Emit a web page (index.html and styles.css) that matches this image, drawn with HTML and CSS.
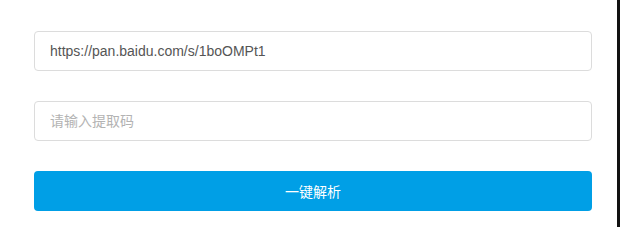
FILE: index.html
```html
<!DOCTYPE html>
<html lang="zh-CN">
<head>
<meta charset="utf-8">
<title>一键解析</title>
<link rel="stylesheet" href="styles.css">
</head>
<body>
<div class="page">
  <form class="form">
    <input class="field" type="text" value="https://pan.baidu.com/s/1boOMPt1">
    <input class="field" type="text" placeholder="请输入提取码">
    <button class="submit" type="button">一键解析</button>
  </form>
  <div class="edge"></div>
</div>
</body>
</html>
```
FILE: styles.css
```css
html, body {
  margin: 0;
  padding: 0;
  background: #fff;
}
.page {
  display: flex;
  width: 620px;
  height: 227px;
}
.form {
  flex: 1;
  display: flex;
  flex-direction: column;
  gap: 30px;
  padding: 31px 25px 0 34px;
  margin: 0;
}
.field {
  box-sizing: border-box;
  height: 40px;
  width: 100%;
  margin: 0;
  padding: 0 15px;
  border: 1px solid #dcdcdc;
  border-radius: 4px;
  background: #fff;
  font-family: "Liberation Sans", Arial, "Noto Sans CJK SC", sans-serif;
  font-size: 14px;
  color: #555;
  outline: none;
}
.field::placeholder {
  color: #b3b3b3;
}
.submit {
  box-sizing: border-box;
  height: 40px;
  width: 100%;
  margin: 0;
  border: none;
  border-radius: 4px;
  background: #009fe6;
  color: #fff;
  font-family: "Liberation Sans", Arial, "Noto Sans CJK SC", sans-serif;
  font-size: 14px;
}
.edge {
  width: 3px;
  background: #111;
}
```
